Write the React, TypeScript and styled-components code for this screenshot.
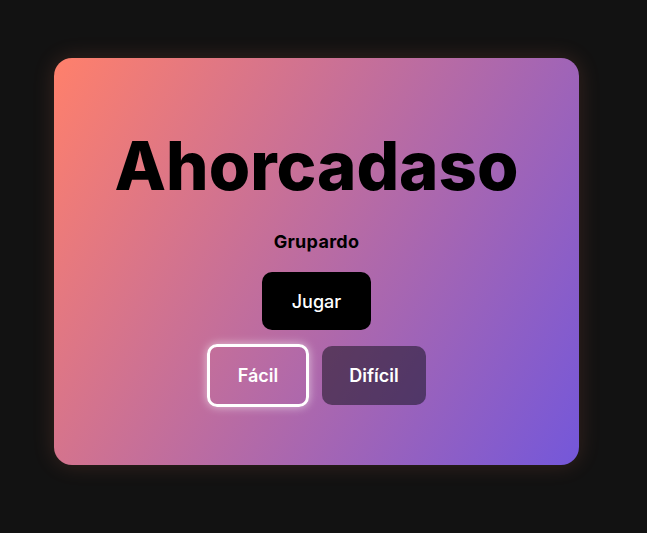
import React, { FC, useState } from "react";
import styled, { createGlobalStyle } from "styled-components";

const GlobalStyle = createGlobalStyle`
  html, body {
    margin: 0;
    padding: 0;
    background: #121212;
  }
  body {
    font-family: "Inter", "Noto Sans", sans-serif;
  }
`;

type Level = "facil" | "dificil";

const App: FC = () => {
  const [level, setLevel] = useState<Level>("facil");

  return (
    <>
      <GlobalStyle />
      <Page>
        <Card>
          <Title>Ahorcadaso</Title>
          <Team>Grupardo</Team>
          <PlayButton>Jugar</PlayButton>
          <LevelRow>
            <LevelButton
              $active={level === "facil"}
              $width={102}
              onClick={() => setLevel("facil")}
            >
              Fácil
            </LevelButton>
            <LevelButton
              $active={level === "dificil"}
              $width={104}
              onClick={() => setLevel("dificil")}
            >
              Difícil
            </LevelButton>
          </LevelRow>
        </Card>
      </Page>
    </>
  );
};

export default App;

const Page = styled.div`
  width: 647px;
  height: 533px;
  box-sizing: border-box;
  padding: 58px 0 0 54px;
`;

const Card = styled.div`
  width: 525px;
  height: 407px;
  box-sizing: border-box;
  border-radius: 18px;
  background: linear-gradient(120deg, #ff806b 0%, #7457da 100%);
  box-shadow: 0 0 22px rgba(255, 128, 100, 0.16);
  display: flex;
  flex-direction: column;
  align-items: center;
  padding-top: 68px;
`;

const Title = styled.h1`
  margin: 0;
  font-size: 67px;
  line-height: 80px;
  font-weight: 800;
  color: #000;
`;

const Team = styled.p`
  margin: 23px 0 0;
  font-size: 18px;
  line-height: 26px;
  font-weight: 700;
  letter-spacing: 0.3px;
  color: #000;
`;

const PlayButton = styled.button`
  margin-top: 17px;
  width: 109px;
  height: 58px;
  border: none;
  border-radius: 10px;
  background: #000;
  color: #fff;
  font-family: inherit;
  font-size: 18px;
  font-weight: 500;
  cursor: pointer;
`;

const LevelRow = styled.div`
  margin-top: 14px;
  display: flex;
  align-items: center;
  gap: 13px;
`;

const LevelButton = styled.button<{ $active: boolean; $width: number }>`
  box-sizing: border-box;
  width: ${(p) => p.$width}px;
  height: ${(p) => (p.$active ? "63px" : "59px")};
  padding: 0;
  border-radius: 10px;
  border: ${(p) => (p.$active ? "3px solid #fff" : "none")};
  background: ${(p) => (p.$active ? "transparent" : "rgba(10, 12, 20, 0.5)")};
  box-shadow: ${(p) =>
    p.$active ? "0 0 10px rgba(255, 255, 255, 0.6)" : "none"};
  color: #fff;
  font-family: inherit;
  font-size: 18px;
  font-weight: 600;
  cursor: pointer;
`;
